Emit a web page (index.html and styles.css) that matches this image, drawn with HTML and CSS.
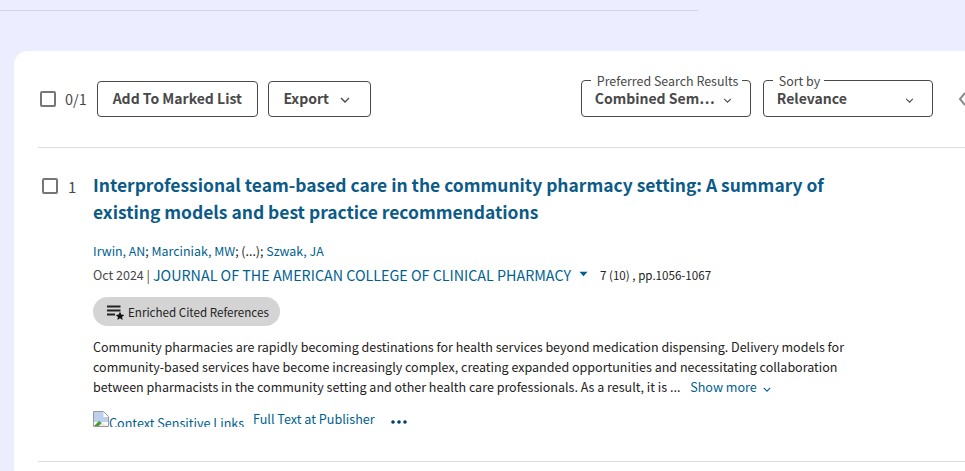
FILE: index.html
```html
<!DOCTYPE html>
<html lang="en">
<head>
<meta charset="utf-8">
<title>Results</title>
<link rel="stylesheet" href="styles.css">
</head>
<body>
<div class="topline"></div>
<main class="card">
  <div class="toolbar">
    <span class="check"></span>
    <span class="count">0/1</span>
    <button class="btn btn-add">Add To Marked List</button>
    <button class="btn btn-export">Export
      <svg class="chev" viewBox="0 0 10 6" width="10" height="6"><path d="M1 1l4 4 4-4" fill="none" stroke="#494949" stroke-width="1.4"/></svg>
    </button>
    <span class="spacer"></span>
    <fieldset class="select sel-pref">
      <legend>Preferred Search Results</legend>
      <span class="value">Combined Sem…</span>
      <svg class="chev" viewBox="0 0 10 6" width="9" height="5"><path d="M1 1l4 4 4-4" fill="none" stroke="#494949" stroke-width="1.3"/></svg>
    </fieldset>
    <fieldset class="select sel-sort">
      <legend>Sort by</legend>
      <span class="value">Relevance</span>
      <svg class="chev" viewBox="0 0 10 6" width="9" height="5"><path d="M1 1l4 4 4-4" fill="none" stroke="#494949" stroke-width="1.3"/></svg>
    </fieldset>
    <svg class="pager" viewBox="0 0 8 14" width="8" height="14"><path d="M7 1L2 7l5 6" fill="none" stroke="#8a8a8a" stroke-width="2"/></svg>
  </div>
  <article class="record">
    <div class="rec-side">
      <span class="check"></span>
      <span class="num">1</span>
    </div>
    <div class="rec-body">
      <h2 class="title">Interprofessional team-based care in the community pharmacy setting: A summary of existing models and best practice recommendations</h2>
      <div class="authors"><a>Irwin, AN</a>; <a>Marciniak, MW</a>; (...); <a>Szwak, JA</a></div>
      <div class="source">
        <span class="date">Oct 2024 |</span>
        <a class="journal">JOURNAL OF THE AMERICAN COLLEGE OF CLINICAL PHARMACY</a>
        <svg class="caret" viewBox="0 0 10 6" width="9" height="6"><path d="M0.5 0.5h9L5 5.5z" fill="#005f8f"/></svg>
        <span class="vol">7 (10) , pp.1056-1067</span>
      </div>
      <div class="badge">
        <svg viewBox="0 0 18 18" width="18" height="18"><path d="M0 2.5h13.5v2H0zM0 6.5h13.5v2H0zM0 10.5h8v2H0z" fill="#222"/><path d="M13 8.8l1.3 2.8 3 .3-2.3 2 .7 3-2.7-1.6-2.7 1.6.7-3-2.3-2 3-.3z" fill="#111"/></svg>
        <span>Enriched Cited References</span>
      </div>
      <p class="abstract">Community pharmacies are rapidly becoming destinations for health services beyond medication dispensing. Delivery models for community-based services have become increasingly complex, creating expanded opportunities and necessitating collaboration between pharmacists in the community setting and other health care professionals. As a result, it is ... <a class="more">Show more <svg viewBox="0 0 10 6" width="8" height="5"><path d="M1 1l4 4 4-4" fill="none" stroke="#005f8f" stroke-width="1.4"/></svg></a></p>
      <div class="links">
        <div class="broken">
          <svg viewBox="0 0 16 16" width="16" height="16"><path d="M.5.5h10l5 5v10H.5z" fill="#fff" stroke="#9a9a9a"/><path d="M1 1h9.5v5H15v5H1z" fill="#bcd0ee"/><path d="M1 15l5-5 3 2-3 3z" fill="#4d9a35"/><path d="M6 15l3-3 6 3z" fill="#e8e8e8"/></svg><a>Context Sensitive Links</a>
        </div>
        <a class="fulltext">Full Text at Publisher</a>
        <svg class="dots" viewBox="0 0 16 4" width="16" height="4"><circle cx="2" cy="2" r="1.8" fill="#003f6b"/><circle cx="8" cy="2" r="1.8" fill="#003f6b"/><circle cx="14" cy="2" r="1.8" fill="#003f6b"/></svg>
      </div>
    </div>
  </article>
  <div class="divider-end"></div>
</main>
</body>
</html>
```
FILE: styles.css
```css
* { box-sizing: border-box; }
html, body { height: 100%; }
body {
  margin: 0;
  background: #eceeff;
  font-family: "Noto Sans CJK SC", "Noto Sans", sans-serif;
  color: #222;
  overflow: hidden;
}
a { color: #005f8f; }
.topline { width: 698px; height: 1px; margin-top: 10px; background: #d5d6e6; }
.card {
  margin: 40px 0 0 14px;
  width: 980px;
  height: 440px;
  background: #fff;
  border-radius: 14px 0 0 0;
  padding: 30px 0 0 24px;
}
.toolbar {
  display: flex;
  align-items: center;
  height: 67px;
  padding: 0 0 31px 2px;
  border-bottom: 1px solid #dcdcdc;
}
.check {
  display: block;
  width: 16px;
  height: 16px;
  border: 2px solid #767676;
  border-radius: 2px;
  flex: none;
}
.count { margin-left: 9px; color: #494949; font-size: 14.5px; line-height: 20px; }
.btn {
  font: 600 14px/18px "Noto Sans CJK SC", sans-serif;
  color: #494949;
  height: 36px;
  background: #fff;
  border: 1px solid #494949;
  border-radius: 4px;
  padding: 0 0 2px;
}
.btn-add { width: 161px; margin-left: 10px; }
.btn-export { width: 103px; margin-left: 10px; padding-right: 5px; }
.btn-export .chev { margin-left: 8px; vertical-align: 1px; }
.spacer { width: 210px; flex: none; }
.select {
  position: relative;
  display: flex;
  align-items: center;
  width: 170px;
  height: 41px;
  margin: -5px 0 0;
  padding: 0 0 0 13px;
  border: 1px solid #494949;
  border-radius: 4px;
  min-inline-size: 0;
}
.select legend {
  font-size: 12.45px;
  line-height: 10px;
  height: 10px;
  color: #494949;
  padding: 0 4px 0 6px;
  margin-left: -4px;
  white-space: nowrap;
}
.select .value { font-size: 14px; font-weight: 600; line-height: 20px; color: #494949; margin-top: -6px; }
.select .chev { position: absolute; top: 12px; }
.sel-pref .chev { right: 18px; }
.sel-sort { margin-left: 12px; }
.sel-sort .chev { right: 18px; }
.pager { margin-left: 25px; flex: none; }
.record { display: flex; }
.rec-side { display: flex; align-items: center; gap: 10px; height: 20px; margin: 28px 0 0 4px; width: 51px; flex: none; align-self: flex-start; color: #494949; font-size: 15px; }
.rec-body { width: 780px; flex: none; }
.title {
  margin: 23px 0 0;
  font-size: 17.43px;
  line-height: 27px;
  font-weight: 600;
  color: #0b5a88;
}
.authors { margin-top: 17px; font-size: 12.4px; line-height: 18px; color: #222; }
.source { margin-top: 6px; display: flex; align-items: center; font-size: 12.5px; line-height: 18px; color: #494949; }
.journal { font-size: 14.3px; margin-left: 3px; }
.caret { margin-left: 8px; margin-top: -3px; }
.vol { margin-left: 12px; font-size: 11.6px; color: #222; }
.badge {
  display: inline-flex;
  align-items: center;
  gap: 3px;
  height: 29px;
  margin-top: 13px;
  padding: 0 11px 0 14px;
  border-radius: 15px;
  background: #d4d4d4;
  font-size: 11.6px;
  color: #222;
}
.abstract { margin: 11px 0 0; font-size: 12.52px; line-height: 20px; color: #222; width: 770px; }
.more { margin-left: 7px; font-size: 12.6px; }
.more svg { margin-left: 3px; }
.links { display: flex; align-items: flex-start; margin-top: 14px; height: 28px; font-size: 12.6px; }
.broken { display: flex; align-items: flex-start; height: 16px; overflow: hidden; width: 151px; line-height: 20px; }
.broken svg { flex: none; }
.broken a { white-space: nowrap; margin-top: 2px; }
.fulltext { margin-left: 9px; line-height: 18px; margin-top: -1px; }
.dots { margin-left: 16px; margin-top: 9px; }
.divider-end { height: 1px; background: #dcdcdc; margin-top: 22px; }
```
